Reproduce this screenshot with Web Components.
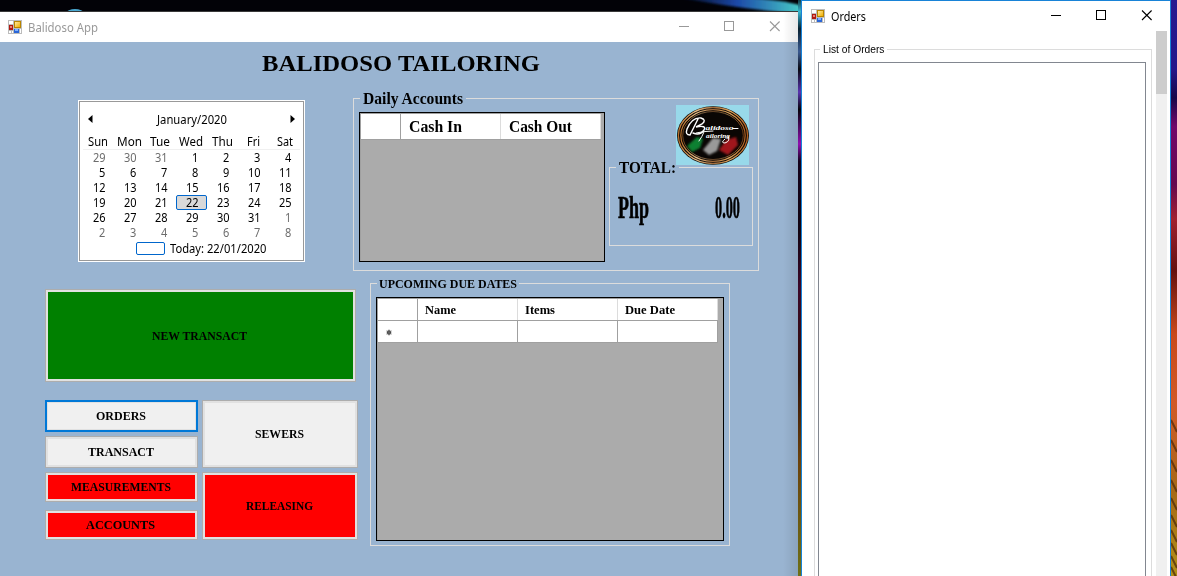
<!DOCTYPE html>
<html lang="en">
<head>
<meta charset="utf-8">
<title>Balidoso App</title>
<style>
html,body{margin:0;height:100%;overflow:hidden;background:#020207}
</style>
</head>
<body>
<desk-top></desk-top>
<script>
function define(name, html, setup) {
  const t = document.createElement('template');
  t.innerHTML = html;
  customElements.define(name, class extends HTMLElement {
    constructor() {
      super();
      this.attachShadow({mode: 'open'}).appendChild(t.content.cloneNode(true));
    }
    connectedCallback() { if (setup) setup(this, this.shadowRoot); }
  });
}

// A single line of text condensed or widened to a given width
define('fit-text', `<style>
:host{display:inline-block;white-space:nowrap}
span{display:inline-block;transform-origin:0 50%}
</style><span></span>`, (el, r) => {
  const s = r.querySelector('span');
  s.textContent = el.getAttribute('text');
  const w = +el.getAttribute('width');
  el.style.width = w + 'px';
  const real = s.offsetWidth;
  const b = s.getBoundingClientRect().width || real;
  s.style.transform = 'scaleX(' + w / b + ')';
});

define('form-icon', `<style>:host{display:block;width:14px;height:14px}svg{display:block}</style>
<svg width="14" height="14" viewBox="0 0 14 14" shape-rendering="crispEdges">
<defs><linearGradient id="y" x1="0" y1="0" x2="1" y2="1"><stop offset="0" stop-color="#ffe9a0"/><stop offset="1" stop-color="#f0b000"/></linearGradient></defs>
<rect width="14" height="14" fill="#bcbcbc"/><rect x="1" y="1" width="4" height="3" fill="#fff"/><rect x="1" y="11" width="4" height="2" fill="#fff"/><path d="M3 11v2" stroke="#bcbcbc"/>
<rect x="1" y="5" width="4" height="5" fill="#b01810"/><rect x="2" y="6" width="2" height="2" fill="#e88078"/>
<rect x="6" y="1" width="7" height="7" fill="#b98500"/><rect x="7" y="2" width="5" height="5" fill="url(#y)"/>
<rect x="6" y="9" width="5" height="4" fill="#2a66d8"/><rect x="7" y="9" width="3" height="2" fill="#7fb2ff"/><rect x="12" y="9" width="1" height="4" fill="#fff"/></svg>`);

define('title-bar', `<style>
:host{display:flex;align-items:center;box-sizing:border-box;background:#fff;font:12px "Noto Sans",sans-serif;color:var(--ink)}
form-icon{margin-right:6px}
.caps{margin-left:auto;display:flex;gap:34px;transform:translateY(-1px)}
svg{display:block;width:11px;height:11px;overflow:visible}
path,rect{fill:none;stroke:currentColor;stroke-width:1}
.x path{stroke-width:1.1}
slot{display:block;transform:translateY(-.5px)}
</style><form-icon></form-icon><slot></slot>
<div class="caps">
<svg viewBox="0 0 11 11"><path d="M-1 5.5h10"/></svg>
<svg viewBox="0 0 11 11"><rect x="-.5" y=".5" width="9" height="9"/></svg>
<svg class="x" viewBox="0 0 11 11"><path d="M0 .5L9.600 10M9.600 .5L0 10"/></svg></div>`);

define('group-box', `<style>
:host{display:block}
fieldset{box-sizing:border-box;height:100%;width:100%;min-width:0;margin:0;padding:0;border:1px solid var(--line,#dcdcdc);display:block}
legend{height:15px;line-height:15px;margin:0 0 0 var(--ll,6px);padding:0 var(--lp,3px);color:#000}
legend fit-text{display:block}
</style><fieldset><legend><fit-text></fit-text></legend><slot></slot></fieldset>`, (el, r) => {
  const l = r.querySelector('legend'), f = document.createElement('fit-text');
  f.setAttribute('text', el.getAttribute('label'));
  f.setAttribute('width', el.getAttribute('label-width'));
  l.replaceChildren(f);
});

define('flat-button', `<style>
:host{display:flex;box-sizing:border-box;align-items:center;justify-content:center;padding-right:2px;background:var(--bg,#f0f0f0);border:1px solid #adadad;box-shadow:inset 0 0 0 2px #e1e1e1;font:bold 13px "Liberation Serif",serif;color:#000}
:host([focused]){border:2px solid #0078d7;box-shadow:inset 0 0 0 1px #e1e1e1}
:host([tone=green]){--bg:#008000}
:host([tone=red]){--bg:#f00}
</style><slot></slot>`);

define('month-calendar', `<style>
:host{display:flex;flex-direction:column;box-sizing:border-box;width:227px;height:162px;border:1px solid #fff;outline:0;background:#fff;box-shadow:inset 0 0 0 1px #999;font:12px/15px "Noto Sans",sans-serif;color:#000;padding:10px 4px 0}
.head{display:flex;justify-content:space-between;align-items:center;height:17px;padding:0 5px 0 5px}
.head svg{width:5px;height:8px;transform:translateY(-1px)}
.names,.days{display:grid;grid-template-columns:repeat(7,31.1px)}
.names{margin-top:5px;height:16px;border-bottom:1px solid #f0f0f0;text-align:center;justify-items:center;line-height:18px}
.names fit-text{margin-left:-1.2px}
.days div{height:15px;box-sizing:border-box;text-align:right;padding-right:8.9px;display:flex;justify-content:flex-end;align-items:center}
.days .o{color:#6d6d6d}
.days .s{background:#d9d9d9;border:1px solid #0066cc;border-radius:2px;padding-right:7.7px}
.today{display:flex;align-items:center;gap:5px;height:15px;padding-left:53px;margin-top:1px}
.today i{box-sizing:border-box;width:29px;height:13px;border:1px solid #0066cc;border-radius:2px}
</style>
<div class="head"><svg viewBox="0 0 5 8"><path d="M4.5 0v8L0 4z"/></svg><fit-text text="January/2020" width="70"></fit-text><svg viewBox="0 0 5 8"><path d="M.5 0v8L5 4z"/></svg></div>
<div class="names"></div><div class="days"></div>
<div class="today"><i></i><fit-text text="Today: 22/01/2020" width="96.500"></fit-text></div>`, (el, r) => {
  const names = [['Sun',20],['Mon',25],['Tue',20],['Wed',24],['Thu',21],['Fri',13],['Sat',16]];
  r.querySelector('.names').innerHTML = names.map(([n, w]) => `<fit-text text="${n}" width="${w}"></fit-text>`).join('');
  let h = '';
  for (let i = 0; i < 42; i++) {
    const d = i < 3 ? 29 + i : i < 34 ? i - 2 : i - 33;
    const c = i < 3 || i > 33 ? 'o' : d === 22 ? 's' : '';
    h += `<div class="${c}"><fit-text text="${d}" width="${d > 9 ? 12.6 : 6.3}"></fit-text></div>`;
  }
  r.querySelector('.days').innerHTML = h;
});

define('data-grid', `<style>
:host{display:block;box-sizing:border-box;border:1px solid #000;background:#ababab;padding:1px 0 0 1px;font-family:"Liberation Serif",serif;font-weight:bold;color:#000;box-shadow:inset 1px 1px 0 #a0a0a0}
.row{display:grid;box-sizing:border-box;background:#fff;border-bottom:1px solid #a0a0a0}
.row>div{box-sizing:border-box;border-right:1px solid #a0a0a0;display:flex;align-items:center;padding-left:var(--cell,8px)}
.h>div{border-right-color:#dcdcdc}
.h>div:first-child{border-right-color:#a0a0a0}
.star svg{width:7px;height:7px;margin-top:2px}
.n>div:first-child{border-right-color:#a0a0a0}
</style><div class="row h"></div>`, (el, r) => {
  const cols = el.getAttribute('columns').split(',').map(c => c.split(':'));
  const row = r.querySelector('.row');
  const w = 39 + 100 * cols.length + 1;
  row.style.cssText = `width:${w}px;height:${el.getAttribute('head')}px;grid-template-columns:40px repeat(${cols.length},100px)`;
  row.innerHTML = '<div></div>' + cols.map(([n, x]) => `<div><fit-text text="${n}" width="${x}"></fit-text></div>`).join('');
  if (el.hasAttribute('editable')) {
    const n = row.cloneNode(false);
    n.className = 'row n';
    n.style.height = '22px';
    n.innerHTML = '<div class="star"><svg viewBox="0 0 7 7"><circle cx="4" cy="3.5" r="2.2" fill="#444"/><path d="M4 .6v5.8M1.500 2l5 3M6.500 2L1.500 5" stroke="#666" stroke-width="1"/></svg></div>' + cols.map(() => '<div></div>').join('');
    row.after(n);
  }
});

define('shop-logo', `<style>:host{display:block;width:73px;height:60px}svg{display:block}text{font-family:"Liberation Serif",serif;font-style:italic;fill:#fff}</style>
<svg width="73" height="60" viewBox="0 0 73 60">
<defs><linearGradient id="g" x1="0" y1="0" x2="1" y2="0"><stop offset="0" stop-color="#b8702c"/><stop offset=".25" stop-color="#e8c089"/><stop offset=".5" stop-color="#a0693a"/><stop offset=".75" stop-color="#e0a860"/><stop offset="1" stop-color="#b06020"/></linearGradient>
<filter id="b"><feGaussianBlur stdDeviation=".9"/></filter></defs>
<rect width="73" height="60" fill="#98d9ea"/>
<ellipse cx="37" cy="30.5" rx="36" ry="29.3" fill="#0a0604"/>
<g fill="none" stroke="url(#g)"><ellipse cx="37" cy="30.5" rx="34.6" ry="28" stroke-width="1.3"/><ellipse cx="37" cy="30.5" rx="32.2" ry="25.8" stroke-width="1.2"/><ellipse cx="37" cy="30.5" rx="30.3" ry="24" stroke-width=".6"/></g>
<g filter="url(#b)"><path d="M11 41l10-9 6 2-3 9-8 4z" fill="#0a8030"/><path d="M27 45l10-12 8 1-4 12-8 4z" fill="#999"/><path d="M43 45l7-10 10-3 2 8-10 10z" fill="#a0141c"/></g>
<g stroke="#fff" fill="none" stroke-linecap="round"><path d="M22 14Q17 24 14 30Q9 30 11 24Q16 12 25 13Q31 15 26 19L20 22Q31 20 28 25Q24 31 17 28" stroke-width="1.4"/><path d="M20 28Q28 26 37 26M28 27Q26 32 23 36M49 34Q44 38 49 38Q55 36 52 31M57 23.500h5" stroke-width="1"/></g>
<text x="29.500" y="25" font-size="7" textLength="28" lengthAdjust="spacingAndGlyphs">alidoso</text>
<text x="30" y="32.500" font-size="7" textLength="24" lengthAdjust="spacingAndGlyphs">ailoring</text>
</svg>`);

define('main-window', `<style>
:host{display:flex;flex-direction:column;box-sizing:border-box;background:#99b4d1;border-top:1px solid #3a3a3a;font-family:"Liberation Serif",serif;--line:#dcdcdc}
:host::after{content:"";position:absolute;right:0;top:0;bottom:0;width:15px;background:linear-gradient(90deg,#0000,#00000018)}
title-bar{height:30px;padding:0 17px 0 8px;--ink:#999}
h1{margin:0;height:43px;display:flex;align-items:center;justify-content:center;padding-left:4px;font:bold 22.5px "Liberation Serif",serif;color:#000}
.cols{display:flex;margin-top:6px}
.left{width:353px;flex:none;padding-top:9px;display:flex;flex-direction:column}
month-calendar{margin-left:78px}
.new{margin:27px 0 18px 45px;width:311px;height:93px}
.btns{display:flex;margin-left:45px;gap:4px;width:320px}
.a,.b{display:flex;flex-direction:column;gap:4px}
.a{width:153px}.b{width:156px}
.a>*{height:32px}
.a>.m{height:30px}.a>.c{height:30px;margin-top:4px}
.b>*{height:68px}
.right{position:relative}
.daily{width:406px;height:180px;font:bold 16px "Liberation Serif",serif}
.in{display:flex;padding-left:5px;gap:4px}
.in data-grid{width:246px;height:150px;margin-top:6px;font-size:16px;flex:none}
.side{width:144px;display:flex;flex-direction:column}
shop-logo{align-self:flex-end;margin:-1px 4px 0 0}
.total{margin-top:-5px;height:86px}
.sum{display:flex;justify-content:space-between;align-items:center;height:66px;padding:0 12.5px 0 8px;font-size:31px;line-height:36px;-webkit-text-stroke:.6px #000}
.due{margin:5px 0 0 17px;width:360px;height:270px;font:bold 13px "Liberation Serif",serif;--lp:2px}
.due data-grid{margin:6px 0 0 5px;width:348px;height:244px;font-size:13px;--cell:7px}
</style>
<title-bar><fit-text text="Balidoso App" width="70"></fit-text></title-bar>
<h1><fit-text text="BALIDOSO TAILORING" width="278"></fit-text></h1>
<div class="cols"><div class="left"><month-calendar></month-calendar>
<flat-button class="new" tone="green"><fit-text text="NEW TRANSACT" width="95"></fit-text></flat-button>
<div class="btns"><div class="a">
<flat-button focused><fit-text text="ORDERS" width="50"></fit-text></flat-button>
<flat-button><fit-text text="TRANSACT" width="66"></fit-text></flat-button>
<flat-button class="m" tone="red"><fit-text text="MEASUREMENTS" width="100"></fit-text></flat-button>
<flat-button class="c" tone="red"><fit-text text="ACCOUNTS" width="69"></fit-text></flat-button></div>
<div class="b"><flat-button><fit-text text="SEWERS" width="49"></fit-text></flat-button>
<flat-button class="r" tone="red"><fit-text text="RELEASING" width="67"></fit-text></flat-button></div></div></div>
<div class="right">
<group-box class="daily" label="Daily Accounts" label-width="100"><div class="in">
<data-grid head="26" columns="Cash In:53,Cash Out:63"></data-grid>
<div class="side"><shop-logo></shop-logo>
<group-box class="total" label="TOTAL:" label-width="57"><div class="sum"><fit-text text="Php" width="31"></fit-text><fit-text text="0.00" width="25"></fit-text></div></group-box></div></div></group-box>
<group-box class="due" label="UPCOMING DUE DATES" label-width="138"><data-grid head="22" editable columns="Name:31,Items:30,Due Date:50"></data-grid></group-box>
</div></div>`);

define('orders-window', `<style>
:host{display:flex;flex-direction:column;box-sizing:border-box;background:#fff;border:1px solid #1883d7;border-bottom:0}
title-bar{height:30px;flex:none;padding:0 17px 0 9px;--ink:#000}
.body{display:flex;flex:1}
group-box{margin:11px 0 0 12px;width:338px;height:600px;font:11.5px "Liberation Sans",sans-serif;--lp:2.5px;--ll:5px;--line:#dcdcdc}
.list{box-sizing:border-box;margin:5px 5px 0 3px;height:560px;border:1px solid #828790;background:#fff}
.bar{margin-left:4px;width:11px;height:600px;background:#f0f0f0}
.bar div{height:63px;background:#cdcdcd}
</style><title-bar><fit-text text="Orders" width="35"></fit-text></title-bar>
<div class="body"><group-box label="List of Orders" label-width="61.500"><div class="list"></div></group-box><div class="bar"><div></div></div></div>`);

// Wallpaper shows above and between the two free-floating windows
define('desk-top', `<style>
:host{display:block;position:relative;width:1177px;height:576px;overflow:hidden;background:#020207}
.w{position:absolute;left:0;top:0}
main-window{position:absolute;left:0;top:11px;width:798px;height:565px}
orders-window{position:absolute;left:801px;top:0;width:370px;height:576px;overflow:hidden}
</style>
<svg class="w" width="1177" height="576"><defs>
<linearGradient id="m" x1="0" y1="0" x2="0" y2="1"><stop offset="0" stop-color="#164048"/><stop offset=".02" stop-color="#39b6cf"/><stop offset=".05" stop-color="#082030"/><stop offset=".09" stop-color="#3a5a90"/><stop offset=".12" stop-color="#08080f"/><stop offset=".16" stop-color="#5a35b0"/><stop offset=".19" stop-color="#060208"/><stop offset=".25" stop-color="#9010b0"/><stop offset=".28" stop-color="#14021a"/><stop offset=".4" stop-color="#120410"/><stop offset=".5" stop-color="#3c0828"/><stop offset=".65" stop-color="#301008"/><stop offset=".8" stop-color="#6b420c"/><stop offset="1" stop-color="#6e7018"/></linearGradient>
<linearGradient id="r" x1="0" y1="0" x2="0" y2="1"><stop offset="0" stop-color="#251a90"/><stop offset=".12" stop-color="#24168a"/><stop offset=".17" stop-color="#170848"/><stop offset=".22" stop-color="#71086a"/><stop offset=".32" stop-color="#650850"/><stop offset=".38" stop-color="#a02030"/><stop offset=".47" stop-color="#641010"/><stop offset=".58" stop-color="#c8491c"/><stop offset=".7" stop-color="#d05a28"/><stop offset=".85" stop-color="#a56818"/><stop offset="1" stop-color="#b09018"/></linearGradient>
<linearGradient id="c" x1="0" y1="0" x2="1" y2="0"><stop offset="0" stop-color="#123a90" stop-opacity="0"/><stop offset=".5" stop-color="#1c48a8"/><stop offset="1" stop-color="#48d0c8"/></linearGradient>
<filter id="s"><feGaussianBlur stdDeviation="1.2"/></filter></defs>
<circle cx="75" cy="25" r="16" fill="#4aa8d0"/>
<path d="M670-4L735-3Q780-1 803 6V14Q745 10 670-4" fill="url(#c)" filter="url(#s)"/>
<rect x="798" y="0" width="3" height="576" fill="url(#m)"/><rect x="1171" width="6" height="576" fill="url(#r)"/>
<path d="M1171 420l6 12M1171 440l6 12M1171 460l6 12M1171 480l6 12M1171 498l6 12M1171 515l6 12M1171 530l6 12M1171 543l6 12M1171 556l6 12M1171 567l6 12" stroke="#4a2608" stroke-width="2" opacity=".7"/></svg>
<main-window></main-window><orders-window></orders-window>`);
</script>
</body>
</html>
